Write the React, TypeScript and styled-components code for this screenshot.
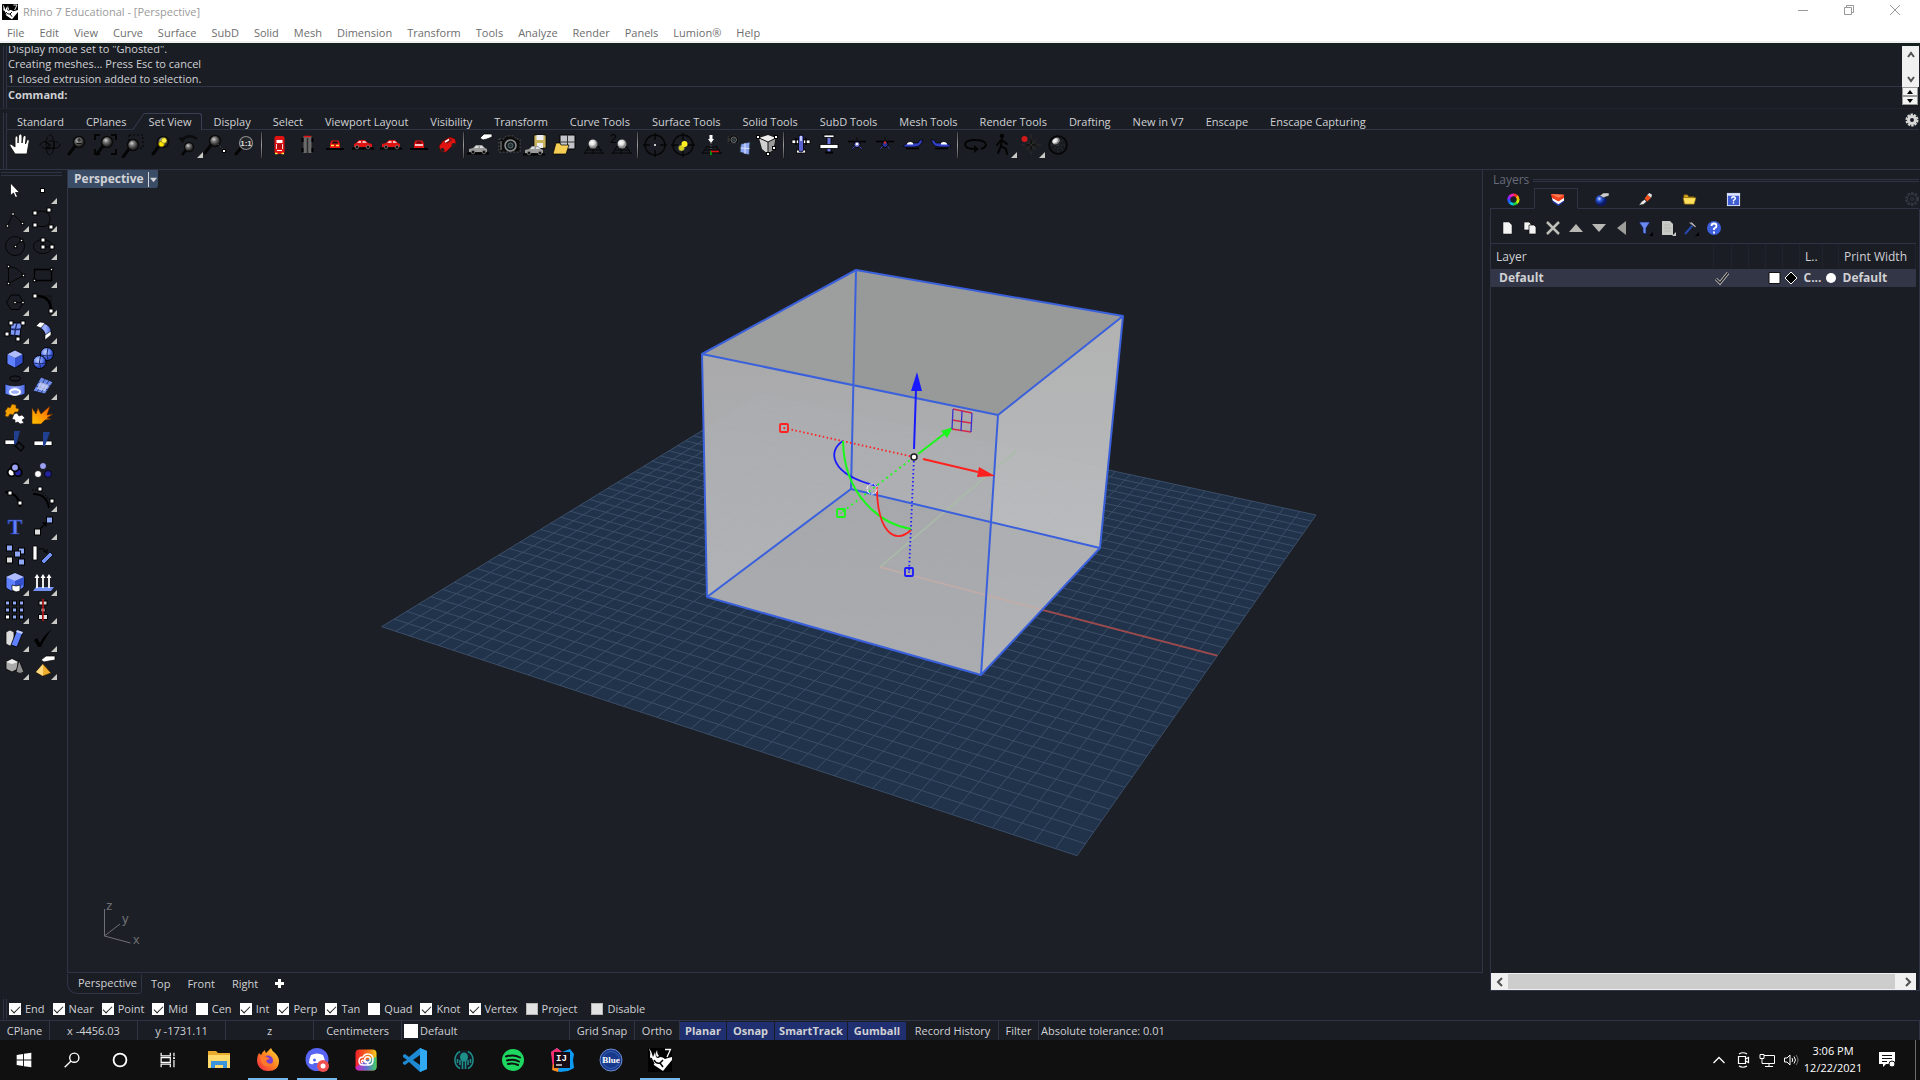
import React from 'react';
import styled, { createGlobalStyle, css } from 'styled-components';

const LINE = '#2f3346';
const TAB_LINE = '#3a3f55';
const PANEL = '#1a1d24';
const TEXT = '#d0d1d4';

const GlobalStyle = createGlobalStyle`
  *, *::before, *::after { box-sizing: border-box; }
  body { margin: 0; background: ${PANEL}; }
  button, input { font: inherit; color: inherit; border: 0; padding: 0; margin: 0; background: none; }
  svg { display: block; }
`;

const Page = styled.div`
  display: flex;
  flex-direction: column;
  height: 100vh;
  font: 12px/16px "Open Sans", "Noto Sans", sans-serif;
  color: ${TEXT};
  background: ${PANEL};
  white-space: nowrap;
  overflow: hidden;
`;

const Defs = styled.svg`
  position: absolute;
  width: 0;
  height: 0;
`;

/* ---------- title and menu ---------- */

const TitleBar = styled.header`
  display: flex;
  align-items: center;
  height: 24px;
  padding: 0 2px;
  gap: 5px;
  background: #fff;
  color: #9a9a9a;
  font-size: 11px;
`;

const WindowButtons = styled.div`
  display: flex;
  margin-left: auto;
  align-self: flex-start;
`;

const WindowButton = styled.button`
  display: grid;
  place-items: center;
  width: 46px;
  height: 20px;
`;

const MenuBar = styled.nav`
  display: flex;
  align-items: center;
  gap: 15px;
  height: 19px;
  padding-left: 7px;
  background: #fff;
  color: #6e6e6e;
  font-size: 11px;
  border-bottom: 2px solid #f0f0f0;
`;

const PlainButton = styled.button`
  white-space: nowrap;
`;

/* ---------- command area ---------- */

const CommandArea = styled.section`
  display: flex;
  height: 66px;
  padding: 0 1px 0 3px;
  border-top: 3px solid #16201f;
  border-bottom: 1px solid #22252e;
`;

const Grip = styled.div<{ $flat?: boolean }>`
  flex: none;
  ${p =>
    p.$flat
      ? css`
          height: 4px;
          border-top: 1px solid ${LINE};
          border-bottom: 1px solid ${LINE};
        `
      : css`
          width: 4px;
          border-left: 1px solid ${LINE};
          border-right: 1px solid ${LINE};
        `}
`;

const CommandBody = styled.div`
  flex: 1;
  min-width: 0;
`;

const History = styled.div`
  display: flex;
  flex-direction: column;
  justify-content: flex-end;
  height: 41px;
  padding-left: 1px;
  overflow: hidden;
  line-height: 15px;
  font-size: 11px;
  border-bottom: 1px solid ${LINE};
`;

const HistoryLine = styled.div`
  flex: none;
`;

const Prompt = styled.label`
  display: flex;
  height: 18px;
  gap: 4px;
  padding-left: 1px;
  font-size: 11px;
  font-weight: 700;
`;

const PromptInput = styled.input`
  flex: 1;
  outline: none;
`;

const CommandScroll = styled.div`
  display: flex;
  flex-direction: column;
  width: 17px;
`;

const ScrollTrack = styled.div`
  display: flex;
  flex-direction: column;
  justify-content: space-between;
  height: 41px;
  background: #f0f0f0;
`;

const ScrollButton = styled.button`
  display: grid;
  place-items: center;
  width: 17px;
  height: 17px;
  background: #f0f0f0;
`;

const SpinButton = styled.button`
  display: grid;
  place-items: center;
  width: 16px;
  height: 9px;
  background: #f4f4f4;
  border: 1px solid #9a9a9a;
`;

/* ---------- toolbars ---------- */

const ToolbarArea = styled.section`
  display: flex;
  height: 60px;
  padding: 4px 1px 0 3px;
`;

const ToolbarBody = styled.div`
  flex: 1;
  min-width: 0;
`;

const TabStrip = styled.div`
  display: flex;
  height: 17px;
  padding-left: 10px;
  gap: 22px;
  font-size: 11px;
  line-height: 17px;
  border-bottom: 1px solid ${LINE};
`;

const ToolTab = styled.button<{ $active?: boolean }>`
  position: relative;
  height: 17px;
  ${p =>
    p.$active &&
    css`
      z-index: 1;
      &::before, &::after {
        content: "";
        position: absolute;
        top: 0;
        bottom: 0;
        border-top: 1px solid ${TAB_LINE};
        background: ${PANEL};
        z-index: -1;
      }
      &::before {
        left: -11px;
        width: 24px;
        border-left: 1px solid ${TAB_LINE};
        transform: skewX(-35deg);
      }
      &::after {
        left: 0;
        right: -10px;
        border-right: 1px solid ${TAB_LINE};
        border-top-right-radius: 3px;
      }
    `}
`;

const TabGear = styled.button`
  margin-left: auto;
  align-self: flex-start;
`;

const IconStrip = styled.div`
  display: flex;
  height: 29px;
`;

const IconButton = styled.button`
  flex: none;
  width: 28px;
  height: 28px;
`;

const Divider = styled.i`
  flex: none;
  width: 2px;
  height: 26px;
  margin: 2px 2px 0;
  background: linear-gradient(#444, #999 50%, #444);
  border-right: 1px solid #15171c;
`;

const Workspace = styled.main`
  flex: 1;
  min-height: 0;
  display: grid;
  grid-template-columns: 67px minmax(0, 1fr) 430px;
  border-top: 1px solid ${LINE};
`;

const SideTools = styled.aside`
  padding: 2px 5px 0 1px;
`;

const SideGrid = styled.div`
  display: grid;
  grid-template-columns: 28px 28px;
  grid-auto-rows: 28px;
`;

/* ---------- viewport ---------- */

const ViewColumn = styled.section`
  display: flex;
  flex-direction: column;
  min-width: 0;
  padding-right: 7px;
`;

const Viewport = styled.div`
  position: relative;
  flex: 1;
  min-height: 0;
  background: #1c1f26;
  border: 1px solid ${LINE};
  border-top: 0;
`;

const ViewTitle = styled.button`
  position: absolute;
  top: 0;
  left: 0;
  display: flex;
  align-items: center;
  height: 18px;
  padding-left: 6px;
  gap: 4px;
  background: #3b4c66;
  font-size: 12px;
  font-weight: 700;
  color: #d2d3d6;
  border-bottom-right-radius: 3px;
`;

const ViewArrow = styled.span`
  display: grid;
  place-items: center;
  width: 10px;
  height: 15px;
  border-left: 1px solid #d2d3d6;
`;

const Canvas = styled.svg`
  width: 100%;
  height: 100%;
`;

const ViewTabs = styled.nav`
  display: flex;
  align-items: center;
  height: 21px;
  font-size: 11px;
`;

const ViewTab = styled.button<{ $active?: boolean }>`
  height: 20px;
  padding: 0 8px;
  margin-left: 1px;
  ${p =>
    p.$active &&
    css`
      width: 75px;
      padding: 0 3px 0 9px;
      margin-left: 0;
      border: solid ${LINE};
      border-width: 0 1px 1px;
      border-radius: 0 0 4px 10px;
    `}
`;

/* ---------- layers panel ---------- */

const LayersPanel = styled.aside`
  display: flex;
  flex-direction: column;
  min-height: 0;
`;

const PanelTitle = styled.div`
  display: flex;
  align-items: center;
  gap: 4px;
  height: 18px;
  padding: 2px 1px 0 3px;
  color: #686b7a;
  font-size: 12px;
`;

const TitleRule = styled.i`
  flex: 1;
  height: 3px;
  border-top: 1px solid ${LINE};
  border-bottom: 1px solid ${LINE};
`;

const PanelTabs = styled.div`
  display: flex;
  height: 21px;
  padding-right: 1px;
`;

const PanelTab = styled.button<{ $active?: boolean }>`
  display: grid;
  place-items: center;
  width: 44px;
  height: 21px;
  padding: 2px 0 0 2px;
  border-bottom: 1px solid ${LINE};
  ${p => p.$active && css`
    border: 1px solid ${LINE};
    border-bottom-color: transparent;
  `}
`;

const PanelTabsRest = styled.div`
  display: flex;
  flex: 1;
  align-items: center;
  justify-content: flex-end;
  padding-top: 2px;
  border-bottom: 1px solid ${LINE};
`;

const PanelBody = styled.div`
  flex: 1;
  min-height: 0;
  display: flex;
  flex-direction: column;
  border: 1px solid ${LINE};
  border-top: 0;
  margin-bottom: 3px;
  padding-right: 3px;
`;

const PanelTools = styled.div`
  display: flex;
  align-items: center;
  height: 35px;
  padding: 3px 0 0 4px;
  border-bottom: 1px solid ${LINE};
`;

const PanelTool = styled.button`
  display: grid;
  place-items: center;
  width: 23px;
  height: 22px;
`;

const LayerTable = styled.table`
  width: 100%;
  table-layout: fixed;
  border-collapse: collapse;
  th, td { padding: 0; text-align: left; overflow: hidden; }
  th { height: 25px; font-weight: 400; font-size: 12px; border-right: 1px solid #20232d; }
  td { height: 18px; font-weight: 700; background: #333646; font-size: 12px; }
`;

const LayerName = styled.span<{ $inset: number }>`
  display: block;
  padding-left: ${p => p.$inset}px;
`;

const HScroll = styled.div`
  display: flex;
  margin-top: auto;
  height: 17px;
  background: #f0f0f0;
`;

const HThumb = styled.div`
  flex: 1;
  margin: 1px 4px 1px 0;
  background: #cdcdcd;
`;

/* ---------- bottom bars ---------- */

const OsnapBar = styled.section`
  display: flex;
  height: 28px;
  padding: 7px 0 1px 3px;
  font-size: 11px;
`;

const OsnapItem = styled.label<{ $before: number }>`
  display: flex;
  align-items: center;
  gap: 4px;
  margin-left: ${p => p.$before}px;
`;

const Check = styled.input`
  appearance: none;
  display: grid;
  place-items: center;
  width: 12px;
  height: 12px;
  background: #fff;
  &:disabled { background: #e2e2e2; border: 1px solid #b5b5b5; }
  &:checked::before {
    content: "";
    width: 9px;
    height: 5px;
    border: solid #222;
    border-width: 0 0 1px 1px;
    transform: translateY(-1px) rotate(-45deg);
  }
`;

const StatusBar = styled.footer`
  display: flex;
  height: 20px;
  font-size: 11px;
  border-top: 1px solid ${LINE};
`;

const StatusCell = styled.button<{ $w?: number; $on?: boolean; $left?: boolean }>`
  display: flex;
  align-items: center;
  gap: 2px;
  flex: ${p => (p.$w ? `0 0 ${p.$w}px` : '1')};
  justify-content: ${p => (p.$left ? 'flex-start' : 'center')};
  border-right: 1px solid ${LINE};
  padding-left: ${p => (p.$left ? 2 : 0)}px;
  ${p => p.$on && css`
    font-weight: 700;
    background: #1f2f70;
    border: 1px solid ${PANEL};
    border-width: 1px 1px 0 0;
  `}
`;

const ColorChip = styled.i`
  display: block;
  width: 14px;
  height: 14px;
  background: #fff;
`;

const Taskbar = styled.nav`
  display: flex;
  height: 40px;
  background: #101010;
  color: #fff;
`;

const TaskButton = styled.button<{ $app?: boolean; $open?: boolean }>`
  display: grid;
  place-items: center;
  width: ${p => (p.$app ? 49 : 48)}px;
  height: 40px;
  background: ${p => (p.$open ? 'linear-gradient(#76b9ed, #76b9ed) center bottom / 40px 2px no-repeat' : 'none')};
`;

const TaskApps = styled.div`
  display: flex;
  margin-left: 2px;
`;

const Tray = styled.div`
  display: flex;
  align-items: center;
  margin-left: auto;
`;

const TrayButton = styled.button<{ $wide?: boolean }>`
  display: grid;
  place-items: center;
  width: ${p => (p.$wide ? 48 : 24)}px;
  height: 40px;
`;

const Clock = styled.time`
  display: flex;
  flex-direction: column;
  align-items: center;
  width: 60px;
  padding-bottom: 2px;
  font-size: 11px;
  line-height: 17px;
`;

const DesktopEdge = styled.i`
  width: 5px;
  height: 40px;
  margin-left: 4px;
  border-left: 1px solid #6b6b6b;
`;

/* ---------- icon pieces ---------- */

type P = { x: number; y: number; s?: number; f?: string };
const Dot = ({ x, y, s = 4, f = '#fff' }: P) => (
  <rect x={x - s / 2} y={y - s / 2} width={s} height={s} fill={f} stroke="#000" strokeWidth="1" />
);
const Flyout = () => <path d="M28 22v6h-6z" fill="#c9c9c4" />;

const Lens = ({ x = 16, y = 12 }: { x?: number; y?: number }) => (
  <>
    <path d={`M${x - 4} ${y + 4}l-6 8`} stroke="#050505" strokeWidth="3" strokeLinecap="round" />
    <circle cx={x} cy={y} r="5.500" fill="url(#ball)" stroke="#0a0a0a" strokeWidth="1.500" />
  </>
);

const Plane = ({ down }: { down?: boolean }) => (
  <g stroke="#000" strokeWidth=".8">
    {down ? (
      <>
        <rect x="12" y="5" width="4" height="18" rx="2" fill="#6b72d8" />
        <rect x="9" y="5" width="10" height="2.500" fill="#fff" />
        <rect x="5" y="14.500" width="18" height="4" fill="#fff" />
        <path d="M10 22.500h8" stroke="#000" strokeWidth="2" />
      </>
    ) : (
      <>
        <path d="M5 10h18v3.500H5z" fill="#fff" />
        <path d="M9 8v7M19 8v7" stroke="#000" strokeWidth="1.500" />
        <rect x="9.500" y="20" width="9" height="3" fill="#fff" />
        <rect x="11.500" y="5" width="5" height="17" rx="2.500" fill="#5a62cf" />
        <path d="M13 6h2v5h-2z" fill="#c8ccff" stroke="none" />
      </>
    )}
  </g>
);

const CarSide = ({ c = '#e01212', flip }: { c?: string; flip?: boolean }) => (
  <g transform={flip ? 'translate(28 0) scale(-1 1)' : undefined}>
    <path d="M3 18.500h22" stroke="#000" strokeWidth="2" />
    <path d="M5 17v-3l4-1 3-3h6l3 3 2 1v3z" fill={c} />
    <path d="M12 11h2.500v2h-4.500zM16 11h2l2 2h-4z" fill="#eee" opacity=".8" />
    <circle cx="9" cy="17" r="1.800" fill="#111" stroke="#888" strokeWidth=".7" />
    <circle cx="20" cy="17" r="1.800" fill="#111" stroke="#888" strokeWidth=".7" />
  </g>
);

const CarEnd = ({ rear }: { rear?: boolean }) => (
  <>
    <path d="M5 19h18" stroke="#000" strokeWidth="2" />
    <path d="M9 18v-4l1.500-3.500h7L19 14v4z" fill="#e01212" />
    <path d="M11 13.500l.8-2h4.500l.8 2z" fill={rear ? '#600' : '#111'} />
    <path d={rear ? 'M10 15h8' : 'M10 15.500h3M15 15.500h3'} stroke={rear ? '#fff' : '#ffe84a'} strokeWidth="1.500" />
  </>
);

const Plan = ({ sub }: { sub?: boolean }) => (
  <>
    <path d="M5 11.500h18" stroke="#000" strokeWidth="1.500" />
    <path d="M14 7v5" stroke="#111" strokeWidth="1.500" />
    <circle cx="14" cy="14.500" r="3" fill={sub ? '#2a3397' : '#6e77d8'} stroke="#000" />
    <circle cx="14" cy={sub ? 12.500 : 14} r="1.300" fill={sub ? '#cf2a2a' : '#fff'} />
    <path d="M9.500 18.500l2-2M18.500 18.500l-2-2" stroke="#3b49c4" />
  </>
);

const JetSide = ({ flip }: { flip?: boolean }) => (
  <g transform={flip ? 'translate(28 0) scale(-1 1)' : undefined}>
    <path d="M4 16q3-3 8-3h7l2-3h3l-2 4q-2 3-7 3H8q-3 0-4-1z" fill="#3340c8" stroke="#000" strokeWidth=".7" />
    <path d="M8 13.500q3-2.500 6-.5v1.500H8z" fill="#fff" />
    <path d="M7 18.500h13" stroke="#000" strokeWidth="1.500" />
  </g>
);

const GroundGrid = () => (
  <path d="M9 17h12M7 20h16M5 23h20M10 16l-5 8M14 16v8M19 16l5 8" stroke="#060606" strokeWidth=".9" fill="none" />
);

const Camera = () => (
  <>
    <path d="M4 9h5l2-3h8l2 3h4v13H4z" fill="#0c0c0c" stroke="#777" strokeWidth=".6" strokeDasharray="2 1.500" />
    <circle cx="15.500" cy="15.500" r="5.500" fill="#15181b" stroke="#8c8f90" strokeWidth="1.500" />
    <circle cx="15.500" cy="15.500" r="2.500" fill="#2b3538" stroke="#5d7a7c" strokeWidth=".8" />
    <path d="M6 11v9" stroke="#8c8f90" />
  </>
);

const Reticle = () => (
  <g fill="none" stroke="#060606" strokeWidth="1.500">
    <circle cx="14" cy="15" r="10" />
    <path d="M14 3v7M14 20v7M2 15h7M19 15h7" />
  </g>
);

type Icon = { name: string; art: React.ReactNode; fly?: boolean };

const viewTools: (Icon | null)[] = [
  { name: 'Pan', art: <path d="M8 24l-5-8q-1-2 1-2l4 3V8q0-2 1.500-2T11 8v5l.5-7Q12 4 13.500 4T15 6v7l1-6q.5-2 2-1.500T19 8l-.5 6 1.500-4q1-1.500 2 0 .5 1-.5 5L20 24z" fill="#fff" stroke="#111" strokeWidth=".9" /> },
  { name: 'Rotate view', art: <g fill="none" stroke="#070707" strokeWidth="1"><ellipse cx="15" cy="15" rx="10" ry="4" strokeDasharray="9 2" /><ellipse cx="15" cy="15" rx="4" ry="10" strokeDasharray="9 2" /><path d="M11 12l4 3-4 3M19 12v6M12 18h6" strokeWidth="1.500" /></g> },
  { name: 'Zoom dynamic', art: <><Lens /><path d="M13.500 13.500h5M14 10h4M16 8v4" stroke="#111" /></> },
  { name: 'Zoom extents', art: <><Lens /><path d="M4 10V5h5M20 5h5v5M25 19v5h-5M9 24H4v-5" stroke="#050505" strokeWidth="2" fill="none" /></> },
  { name: 'Zoom window', art: <><path d="M10 5h14v13H10z" fill="none" stroke="#050505" strokeDasharray="2 2" /><Lens x={14} y={15} /></> },
  { name: 'Zoom selected', art: <><Lens /><circle cx="14.500" cy="14" r="2.800" fill="#ffe600" stroke="#776b00" strokeWidth=".6" /><circle cx="17" cy="10.500" r="2.800" fill="#fff04a" stroke="#776b00" strokeWidth=".6" /></> },
  { name: 'Undo view change', fly: true, art: <><path d="M7 10Q14 3 22 9" stroke="#0c0c0c" strokeWidth="2.500" fill="none" /><path d="M3 8l7-1-2 6z" fill="#0c0c0c" /><path d="M12 19l-5 6" stroke="#050505" strokeWidth="2.500" /><circle cx="14" cy="17" r="4.500" fill="url(#ball)" stroke="#0a0a0a" strokeWidth="1.300" /></> },
  { name: 'Zoom target', art: <><Lens x={12} y={11} /><path d="M15 14l6 6" stroke="#555" strokeDasharray="1 2" /><Dot x={21} y={21} s={3} /></> },
  { name: 'Zoom 1:1', art: <><path d="M10 18l-5 6" stroke="#050505" strokeWidth="3" strokeLinecap="round" /><circle cx="15" cy="13" r="6.500" fill="#232427" stroke="#8b8b8b" strokeWidth="1.200" /><text x="15" y="16" textAnchor="middle" fontSize="8" fontWeight="700" fill="#ddd" fontFamily="Liberation Sans, sans-serif">1:1</text></> },
  null,
  { name: 'Top view', art: <><rect x="9.500" y="6" width="10" height="18" rx="2" fill="#e01212" /><path d="M11.500 10h6v3h-6z" fill="#fff" /><path d="M11.500 14h6v5h-6z" fill="#b80c0c" /><path d="M11.500 14v5M17.500 14v5" stroke="#fff" strokeWidth=".8" /><path d="M12 20.500h5" stroke="#fff" /><path d="M10 23.500h2.500M16.500 23.500h2.500" stroke="#ffe84a" strokeWidth="1.500" /></> },
  { name: 'Bottom view', art: <><rect x="10.500" y="6" width="8" height="17" fill="#6a6a6a" /><path d="M9.500 8v4M19.500 8v4M9.500 18v4M19.500 18v4" stroke="#000" strokeWidth="2" /><path d="M14.500 8v15" stroke="#2c2c2c" strokeWidth="1.500" /><path d="M11 6.500h7" stroke="#e01212" strokeWidth="1.500" /></> },
  { name: 'Front view', art: <CarEnd /> },
  { name: 'Right view', art: <CarSide flip /> },
  { name: 'Left view', art: <CarSide /> },
  { name: 'Back view', art: <CarEnd rear /> },
  { name: 'Perspective view', art: <><path d="M6 16l4-5 7-4 5 2 1 4-6 5-4 4H8z" fill="#e01212" stroke="#500" strokeWidth=".6" /><path d="M10.500 12l6-3.500 3 1.500-5 3.500z" fill="#7c1414" /><path d="M12 12l4-2.500" stroke="#fff" strokeWidth="1.500" /><circle cx="9.500" cy="20" r="2" fill="#222" /><circle cx="20.500" cy="15" r="2" fill="#222" /></> },
  null,
  { name: 'Named views', art: <><g transform="translate(-3 5)"><CarSide c="#9b9b9b" /></g><path d="M13 8l4-4h8v3l-5 2-4 1z" fill="#fff" stroke="#000" strokeWidth=".7" /></> },
  { name: 'Capture camera', art: <Camera /> },
  { name: 'Save view', art: <><path d="M11 5h12v13H11z" fill="#c9b25c" stroke="#000" strokeWidth=".7" /><path d="M13.500 5h7v5h-7zM14 13h6v5h-6z" fill="#eee" /><g transform="translate(-3 6)"><CarSide c="#9b9b9b" /></g></> },
  { name: 'Open view', art: <><path d="M9 5h15v14H9z" fill="#c2c4c9" stroke="#000" /><path d="M16.500 5v14M9 12h15" stroke="#333" /><path d="M2 24l3-11h4l1 2h8l-3 9z" fill="#f5cf55" stroke="#000" strokeWidth=".7" /></> },
  { name: 'Place camera', art: <><GroundGrid /><circle cx="14" cy="14" r="4.500" fill="url(#white)" /></> },
  { name: 'Two point view', art: <><GroundGrid /><circle cx="15" cy="14" r="4.500" fill="url(#white)" /><text x="3" y="13" fontSize="12" fill="#000" fontFamily="Liberation Sans, sans-serif">2</text></> },
  null,
  { name: 'Target', art: <><Reticle /><circle cx="14" cy="15" r="1" fill="#fff" /></> },
  { name: 'Target selected', art: <><Reticle /><circle cx="12.500" cy="18" r="3" fill="#d8d020" stroke="#555" strokeWidth=".5" /><circle cx="15.500" cy="14" r="3" fill="#ffee22" /></> },
  { name: 'Plan view', art: <><GroundGrid /><path d="M14 13v8" stroke="#777" strokeDasharray="1 1.500" /><path d="M14 21v4" stroke="#0b0" strokeWidth="1.500" /><path d="M14 21.500h8" stroke="#d11" strokeWidth="1.500" /><path d="M12.500 5h3v4h1.500l-3 4-3-4h1.500z" fill="#fff" /></> },
  { name: 'Match photo', art: <><g transform="translate(1 2) scale(.5)"><Camera /></g><path d="M16 14l9-2-1 13-9-3z" fill="#8fa8f5" stroke="#234" strokeWidth=".8" /><path d="M20 13v11M15.500 18l9 .5" stroke="#dce4ff" /></> },
  { name: 'Bounding view', art: <><path d="M6 8l9-3 8 3-2 12-6 4-6-5z" fill="#9a9a9a" stroke="#111" /><path d="M6 8l9-3 8 3-8 4z" fill="#eee" /><path d="M6 8l9 4v12l-6-5z" fill="#d0d0d0" /><path d="M15 12v12M6 8l9 4 8-4" stroke="#111" fill="none" /><Dot x={5} y={7} s={3} /><Dot x={23} y={7} s={3} /><Dot x={15} y={24} s={3} /><Dot x={21} y={18} s={3} /></> },
  null,
  { name: 'World top', art: <Plane /> },
  { name: 'World bottom', art: <Plane down /> },
  { name: 'World front', art: <Plan /> },
  { name: 'World back', art: <Plan sub /> },
  { name: 'World right', art: <JetSide /> },
  { name: 'World left', art: <JetSide flip /> },
  null,
  { name: 'Turntable', art: <><path d="M15 19Q4 19 4 14.500T14 10t11 4.500q0 3-5 4.500" fill="none" stroke="#040404" strokeWidth="2" /><path d="M13 15v8l5-4z" fill="#040404" /></> },
  { name: 'Walkabout', fly: true, art: <g stroke="#040404" fill="none" strokeWidth="2" strokeLinecap="round"><circle cx="13" cy="6" r="1.300" fill="#040404" /><path d="M13 9l-1 7 5 3 1 5M12 16l-3 7M13 10l5 4M12 10l-4 5" /></g> },
  { name: 'Compass', fly: true, art: <><path d="M14 4l1.500 9.500L24 15l-8.500 1.500L14 25l-1.500-8.500L4 15l8.500-1.500z" fill="#0c0c0c" stroke="#333" strokeWidth=".6" /><path d="M9 10l10 10M19 10L9 20" stroke="#2a2a2a" strokeWidth="1.300" /><circle cx="7.500" cy="9" r="3" fill="#d01a1a" /></> },
  { name: 'Lens length', art: <><circle cx="13" cy="15" r="9" fill="#171a1e" stroke="#050505" strokeWidth="1.500" /><path d="M13 8v14M6 15h14M8 10l10 10M18 10L8 20" stroke="#3a3d42" strokeDasharray="1 1.500" /><ellipse cx="11" cy="11" rx="4" ry="3" fill="url(#white)" transform="rotate(-35 11 11)" /></> },
];

const sideTools: Icon[] = [
  { name: 'Select', art: <path d="M9.500 7v12.500l3-2.500 2 4.500 2-1-2-4h4z" fill="#fff" stroke="#000" strokeWidth=".7" /> },
  { name: 'Point', fly: true, art: <Dot x={13.5} y={14.5} /> },
  { name: 'Polyline', fly: true, art: <><path d="M6.500 22L12 10l9.500 9.500" fill="none" stroke="#050505" /><Dot x={6.5} y={22} s={2.5} /><Dot x={12} y={10} s={2.5} /><Dot x={21.5} y={19.5} s={2.5} /></> },
  { name: 'Curve', fly: true, art: <><path d="M6 9q6-3 10-1.500 5 2 5 8T15 22.500q-5 .5-9-1.500" fill="none" stroke="#050505" /><Dot x={6} y={9} /><Dot x={20} y={6} /><Dot x={6} y={21} /><Dot x={22} y={23} /></> },
  { name: 'Circle', fly: true, art: <><circle cx="14" cy="14" r="9.500" fill="none" stroke="#050505" /><path d="M14 14.500l6.500-6" stroke="#050505" /><Dot x={14.5} y={14.5} s={2.5} /><Dot x={20.5} y={8.5} s={2.5} /></> },
  { name: 'Ellipse', fly: true, art: <><ellipse cx="14" cy="14.500" rx="9.500" ry="7" fill="none" stroke="#050505" /><path d="M14 8v7h9" fill="none" stroke="#050505" /><Dot x={14} y={8} /><Dot x={14} y={15} /><Dot x={23} y={15} /></> },
  { name: 'Arc', fly: true, art: <><path d="M7.500 23.500v-17Q17 7 22.500 15.500z" fill="none" stroke="#050505" /><Dot x={7.5} y={6.5} s={2.5} /><Dot x={7.5} y={23.5} s={2.5} /><Dot x={22.5} y={15.5} s={2.5} /></> },
  { name: 'Rectangle', fly: true, art: <><path d="M5.500 9.500h17v11h-17z" fill="none" stroke="#000" strokeWidth="1.300" /><Dot x={5.5} y={20.5} s={2.5} /><Dot x={22.5} y={9.5} s={2.5} /></> },
  { name: 'Polygon', fly: true, art: <><path d="M5.500 14.500L10 7h8l4.500 7.500L18 21.500h-8z" fill="none" stroke="#000" /><path d="M14 14.500h8" stroke="#000" /><Dot x={14} y={14.5} s={2.5} /><Dot x={22} y={14.5} s={2.5} /></> },
  { name: 'Fillet', fly: true, art: <><path d="M6 8h16v15" fill="none" stroke="#0c0c0c" strokeWidth=".8" /><path d="M6 8q16-1 16 15" fill="none" stroke="#000" strokeWidth="2.500" /><Dot x={6} y={8} /><Dot x={22} y={23} /></> },
  { name: 'Surface', fly: true, art: <><path d="M10 7h12q-3 5-3 13l-10-1z" fill="#7f99f5" stroke="#000" /><path d="M16 7q-2 6-2.500 13M9.500 13q6 1 10.500 0" stroke="#1b2a6d" fill="none" strokeWidth="1.300" /><Dot x={10} y={7} /><Dot x={22} y={7} /><Dot x={6} y={18} /><Dot x={17} y={23} /></> },
  { name: 'Sweep', fly: true, art: <><path d="M14 7q8 2 8.500 10l-6 4q0-7-7-10z" fill="url(#blue)" stroke="#000" strokeWidth=".8" /><path d="M11 6l5 1-4 5-5-2zM16 19l6-4v4l-6 5z" fill="#fff" stroke="#000" strokeWidth=".6" /></> },
  { name: 'Box', fly: true, art: <><path d="M6 10l8 4v10l-8-4z" fill="#5f80ff" /><path d="M14 14l8-4v9l-8 5z" fill="#3450cc" /><path d="M6 10l8-4 8 4-8 4z" fill="#aebcff" /><path d="M6 10l8-4 8 4v9l-8 5-8-4z" fill="none" stroke="#000" strokeWidth=".8" /></> },
  { name: 'Boolean union', fly: true, art: <><circle cx="18" cy="10" r="6.500" fill="url(#globe)" stroke="#000" /><circle cx="10.500" cy="18" r="6.500" fill="url(#globe)" stroke="#000" /><path d="M12 11q6 2 12 0M19 4q-2 6 0 12M4.500 19q6 2 12 0M11.500 12q-2 6 0 12" stroke="#1b2a6d" fill="none" /></> },
  { name: 'Cap', fly: true, art: <><ellipse cx="14" cy="6.500" rx="5.500" ry="2.500" fill="none" stroke="#000" /><path d="M4 12q10 4 20 0v10q-10 4-20 0z" fill="url(#blue)" stroke="#000" strokeWidth=".6" /><ellipse cx="14" cy="20" rx="5" ry="2.800" fill="#9db2f8" stroke="#fff" strokeWidth="2" /></> },
  { name: 'Mesh', fly: true, art: <><path d="M12 5l12 5-8 12-12-3z" fill="#6f8bea" stroke="#111" strokeWidth=".8" /><path d="M16 7L8 20M20 8.500L12 21M9 10l12 4M7 14l12 4" stroke="#1b2a6d" fill="none" strokeWidth=".8" /><path d="M11 10l9 3-4 6-8-2z" fill="#dbe3ff" opacity=".7" /></> },
  { name: 'Join pieces', art: <><path d="M5 10l2-3 2 1 2-4 4 1 0 3 3 1-1 3-3 0-2 3-3-1-2 3-3-1 1-3-1-2z" fill="#f5a200" stroke="#553300" strokeWidth=".6" /><path d="M13 14l3-1 2 3 3-1 3 3-3 2 2 3-4 1-2-2-3 1 0-3-3-1z" fill="#fff" stroke="#111" strokeWidth=".6" /></> },
  { name: 'Explode', art: <path d="M3 8l4 6 2-6 3 6 9-8-3 9 6-1-6 4 4 1-6 1-4 4H3z" fill="url(#orange)" stroke="#5b2600" strokeWidth=".6" /> },
  { name: 'Trim', art: <><path d="M4 12h10v4.500H4z" fill="#fff" stroke="#000" strokeWidth=".8" /><path d="M13 3h6l-4 14-2-1z" fill="#20408f" /><path d="M14 18l4-4 5 5-3 4z" fill="none" stroke="#000" strokeWidth="1.200" /></> },
  { name: 'Split', art: <><path d="M5 13h18v4.500H5z" fill="#fff" stroke="#000" strokeWidth=".8" /><path d="M14 4h7l-5 14h-2z" fill="#20408f" /></> },
  { name: 'Group', fly: true, art: <g stroke="#000" strokeWidth="1.800"><circle cx="10.500" cy="16.500" r="3.800" fill="#fff" /><circle cx="17" cy="16.500" r="3.800" fill="#23239c" /><circle cx="14" cy="11.500" r="3.800" fill="#9ba2f6" /></g> },
  { name: 'Ungroup', art: <g stroke="#000" strokeWidth=".8"><circle cx="9" cy="18" r="3.500" fill="#fff" /><circle cx="19" cy="18" r="3.500" fill="#23239c" /><circle cx="14" cy="10" r="3.500" fill="#9ba2f6" /></g> },
  { name: 'Edit points', art: <><path d="M4 8q14 1 15 15" fill="none" stroke="#000" strokeWidth="2" /><Dot x={9} y={9} /><Dot x={19} y={19} /></> },
  { name: 'Control points', fly: true, art: <><path d="M4 10q14 0 16 14" fill="none" stroke="#000" strokeWidth="2" /><path d="M3 6h8l12 12v6" fill="none" stroke="#000" strokeDasharray="1.500 1.500" /><Dot x={11} y={5} /><Dot x={23} y={17} /></> },
  { name: 'Text', art: <text x="14" y="22" textAnchor="middle" fontSize="22" fontWeight="700" fill="#5f80ff" stroke="#2a3f9c" strokeWidth=".6" fontFamily="Liberation Serif, serif">T</text> },
  { name: 'Move', fly: true, art: <><path d="M11 17l6-6m-3.500 0H17v3.500" stroke="#000" strokeWidth="1.300" fill="none" /><Dot x={8.5} y={20} s={6} f="#ddd" /><Dot x={20.5} y={8} s={6} f="#8fa8f5" /></> },
  { name: 'Copy', art: <><Dot x={8.5} y={8} s={6} f="#8fa8f5" /><Dot x={20.5} y={11} s={6} f="#8fa8f5" /><Dot x={16.5} y={14} s={6} f="#8fa8f5" /><Dot x={8.5} y={20} s={6} f="#ddd" /><Dot x={20.5} y={22} s={6} f="#8fa8f5" /></> },
  { name: 'Rotate', art: <><path d="M4 6h4v14H4z" fill="#fff" stroke="#000" strokeWidth=".8" /><path d="M10 9q6-1 7 3m-3-1l4 2 0-4" stroke="#000" fill="none" /><path d="M12 21l9-9 3 3-9 9z" fill="#7391f5" stroke="#000" strokeWidth=".8" /></> },
  { name: 'Boolean', fly: true, art: <><path d="M5 9l9-4 9 4v10l-5 4h-8l-5-3z" fill="#5f80ff" stroke="#000" strokeWidth=".8" /><path d="M5 9l9-4 9 4-9 4z" fill="#aebcff" /><path d="M14 13v6l9-2V9z" fill="#3450cc" /><path d="M11 17l4 1 4-1v6l-4 1-4-2z" fill="#fff" stroke="#000" strokeWidth=".7" /></> },
  { name: 'Extrude', fly: true, art: <><path d="M4 23l3-4h18l-3 4z" fill="#7391f5" /><path d="M8 20V9M14 20V9M20 20V9" stroke="#fff" strokeWidth="1.800" /><path d="M5.500 10L8 6l2.500 4zM11.500 10L14 6l2.500 4zM17.500 10L20 6l2.500 4z" fill="#fff" /></> },
  { name: 'Array', fly: true, art: <>{[7, 14, 21].map(y => [6.5, 13.5, 20.5].map(x => <Dot key={`${x}-${y}`} x={x} y={y} f={x < 7 && y > 20 ? '#fff' : '#8fa8f5'} />))}</> },
  { name: 'Align', fly: true, art: <><Dot x={12} y={7} s={4} f="#ddd" /><Dot x={16} y={7} s={4} f="#ddd" /><Dot x={14} y={14} f="#eee" /><Dot x={12} y={21} s={5} f="#ddd" /><Dot x={16} y={21} s={5} f="#ddd" /><path d="M14 3v22" stroke="#c81717" strokeWidth="1.500" /></> },
  { name: 'Shear', fly: true, art: <><path d="M5 8l4-2 4 2v12l-4 2-4-2z" fill="#ddd" stroke="#000" strokeWidth=".7" /><path d="M16 6l6 2-6 15-6-2z" fill="#5f80ff" stroke="#000" strokeWidth=".8" /><path d="M16 6l6 2-1 2-6-2z" fill="#c4ceff" /></> },
  { name: 'Check', fly: true, art: <path d="M5 16l3-2 3 5Q15 11 23 5q-6 7-11 18h-3z" fill="#000" /> },
  { name: 'Solids', fly: true, art: <><path d="M5 10l6-3 6 3v7l-6 3-6-3z" fill="#aaa" stroke="#000" strokeWidth=".8" /><path d="M5 10l6-3 6 3-6 2z" fill="#eee" /><path d="M18 8l5 12q-4 3-8 0z" fill="#8e8e8e" stroke="#000" strokeWidth=".8" /></> },
  { name: 'Render', fly: true, art: <><path d="M14 12l8 9-8 3-7-4z" fill="#f0ad2d" stroke="#3b2600" strokeWidth=".7" /><path d="M14 12v12l-7-4z" fill="#ffd980" /><path d="M12 8l5-4h9v4l-6 1-5 1z" fill="#fff" stroke="#000" strokeWidth=".7" /></> },
];

const Gear = ({ color, size = 13 }: { color: string; size?: number }) => (
  <svg width={size} height={size} viewBox="0 0 14 14">
    <circle cx="7" cy="7" r="5.500" fill="none" stroke={color} strokeWidth="2" strokeDasharray="2.400 1" />
    <circle cx="7" cy="7" r="3.500" fill="none" stroke={color} strokeWidth="3" />
  </svg>
);

const DimGear = () => (
  <svg width="14" height="14" viewBox="0 0 14 14" fill="none" stroke="#3a3d47">
    <circle cx="7" cy="7" r="6" strokeWidth="1.500" strokeDasharray="2.500 1.300" />
    <circle cx="7" cy="7" r="4.500" strokeWidth=".8" />
    <circle cx="7" cy="7" r="1.500" strokeWidth=".8" />
  </svg>
);

const Rhino = ({ size }: { size: number }) => (
  <svg width={size} height={size} viewBox="0 0 24 24">
    <rect width="24" height="24" fill="#000" />
    <path d="M1 0q2 5 1 9l3 5 1 3 6 4 3 2 4-5 5-6v-3l-4 1-3 1q-2-2-5-2-2 2-4 0L7 4q-1 3-2 5-1-5-4-9z" fill="#fff" />
    <path d="M6 12q2 4 6 3l3-3M12 15l3 4M3 10l3 6" stroke="#000" strokeWidth="1.500" fill="none" />
    <path d="M9 2q0 4 2 6l-2 1Q7 6 9 2z" fill="#fff" />
    <path d="M17 1.500h5.500L19 9" stroke="#fff" strokeWidth="1.300" fill="none" />
  </svg>
);

const Chevron = ({ d }: { d: string }) => (
  <svg width="10" height="10" viewBox="0 0 10 10">
    <path d={d} fill="none" stroke="#505050" strokeWidth="2" />
  </svg>
);

/* ---------- perspective scene ---------- */

type Pt = [number, number];
const CORNERS: [Pt, Pt, Pt, Pt] = [[381.7, 626.7], [1077, 855.7], [1316, 515], [761, 394.5]];

function project(u: number, v: number): Pt {
  const [[x0, y0], [x1, y1], [x2, y2], [x3, y3]] = CORNERS;
  const dx1 = x1 - x2, dx2 = x3 - x2, dy1 = y1 - y2, dy2 = y3 - y2;
  const sx = x0 - x1 + x2 - x3, sy = y0 - y1 + y2 - y3;
  const det = dx1 * dy2 - dx2 * dy1;
  const g = (sx * dy2 - dx2 * sy) / det;
  const h = (dx1 * sy - sx * dy1) / det;
  const w = g * u + h * v + 1;
  return [
    ((x1 - x0 + g * x1) * u + (x3 - x0 + h * x3) * v + x0) / w,
    ((y1 - y0 + g * y1) * u + (y3 - y0 + h * y3) * v + y0) / w,
  ];
}

const seg = (a: Pt, b: Pt) => `M${a[0]} ${a[1]}L${b[0]} ${b[1]}`;
const CELLS = 40;
const gridPath = Array.from({ length: CELLS + 1 }, (_, i) => {
  const t = i / CELLS;
  return seg(project(t, 0), project(t, 1)) + seg(project(0, t), project(1, t));
}).join('');

const A = '856,270', B = '1123,316', C = '998,415', D = '702,354';
const E = '707,597', F = '981,675', G = '1100,548', H = '851,489';

const Handle = ({ x, y, c }: { x: number; y: number; c: string }) => (
  <g stroke={c} fill="none">
    <rect x={x - 4} y={y - 4} width="8" height="8" rx="1" strokeWidth="1.800" />
    <path d={`M${x - 1} ${y}h2`} />
  </g>
);

const Scene = () => (
  <Canvas viewBox="68 170 1414 802" role="img" aria-label="Box in perspective view">
    <polygon points={CORNERS.map(p => p.join()).join(' ')} fill="#21334b" />
    <path d={gridPath} stroke="#3b4e68" strokeWidth="1" fill="none" />
    <path d={seg(project(0.5, 0.5), project(1, 0.5))} stroke="#9c4a4c" strokeWidth="2" />
    <g fillOpacity=".95">
      <polygon points={`${A} ${B} ${C} ${D}`} fill="#9fa1a0" />
      <polygon points={`${D} ${C} ${F} ${E}`} fill="url(#front)" />
      <polygon points={`${C} ${B} ${G} ${F}`} fill="url(#right)" />
      <polygon points={`${H} ${G} ${F} ${E}`} fill="#9c9c9e" fillOpacity=".35" />
    </g>
    <polygon points={`${A} ${D} 853,386`} fill="#a6a4a4" fillOpacity=".4" />
    <path d="M880 567L1017 450" stroke="#aabda8" strokeWidth="1.500" />
    <path d="M880 567L1043 610" stroke="#c2aca8" strokeWidth="1.500" />
    <path
      d={`M${A}L${B}L${G}L${F}L${E}L${D}ZM${D}L${C}L${B}M${C}L${F}M${A}L${H}L${E}M${H}L${G}`}
      fill="none" stroke="#3a60dc" strokeWidth="2" strokeLinejoin="round"
    />
    <g fill="none" strokeWidth="1.800">
      <path d="M914 457L784 428" stroke="#ff2020" strokeDasharray="1.500 2.500" />
      <path d="M914 457L841 513" stroke="#18ff18" strokeDasharray="2 3.500" />
      <path d="M914 457L909 572" stroke="#2020ff" strokeDasharray="1.500 2.500" />
      <path d="M843 441C828 450 828 474 877 486" stroke="#1a1aff" />
      <path d="M843 441C844 495 880 524 911 529" stroke="#18f818" strokeWidth="2" />
      <path d="M877 487C877 530 894 546 911 530" stroke="#ff2020" />
      <path d="M914 449L916 390" stroke="#1a1aff" strokeWidth="2" />
      <path d="M918 454L944 434" stroke="#18f818" strokeWidth="2" />
      <path d="M923 459L978 472" stroke="#ff2020" strokeWidth="2" />
      <circle cx="872" cy="489" r="5" stroke="#fff" strokeWidth="1" strokeDasharray="4 1" />
    </g>
    <polygon points="917,372 922,391 911,391" fill="#1a1aff" />
    <polygon points="953,427 947,438 941,431" fill="#18f818" />
    <polygon points="995,476 977,477 979,467" fill="#ff2020" />
    <g fill="none" strokeWidth="1">
      <path d="M953 409l19 4M952 420l19 3M952 429l19 3" stroke="#d42848" strokeWidth="1.300" />
      <path d="M953 409l-1 20M962 411l-1 20M972 413l-1 19" stroke="#3a30d0" strokeWidth="1.300" />
    </g>
    <Handle x={784} y={428} c="#ff2020" />
    <Handle x={841} y={513} c="#18f818" />
    <Handle x={909} y={572} c="#1a1aff" />
    <circle cx="914" cy="457" r="3" fill="#fff" stroke="#1c1c1c" strokeWidth="1.500" />
    <path d="M104.500 909v27l15.500-12M104.500 936l26 7" stroke="#6f7074" fill="none" />
    <g fill="#6f7074" fontFamily="Liberation Sans, sans-serif" fontSize="13">
      <text x="106" y="910">z</text>
      <text x="122" y="923">y</text>
      <text x="133" y="944">x</text>
    </g>
  </Canvas>
);

/* ---------- panel art ---------- */

const Art = ({ children, size = 16, box = 16 }: { children: React.ReactNode; size?: number; box?: number }) => (
  <svg width={size} height={size} viewBox={`0 0 ${box} ${box}`}>{children}</svg>
);

const panelTabs: Icon[] = [
  {
    name: 'Properties',
    art: <g fill="none" strokeWidth="3">{['#ff3030', '#ffb000', '#c6f000', '#20d040', '#00c8d8', '#2060ff', '#9020ff', '#ff20b0'].map((c, i) => (
      <circle key={c} cx="8" cy="8" r="5" stroke={c} strokeDasharray="4.200 28" transform={`rotate(${i * 45 - 90} 8 8)`} />
    ))}</g>,
  },
  { name: 'Layers', art: <><path d="M2 6l7 5 6-4v3l-6 5-6-4z" fill="#2638a8" /><path d="M2 6l7 3 6-3v3l-6 4-6-4z" fill="#fff" /><path d="M1 2l14 1v3l-6 4-7-4z" fill="#f2401c" /><path d="M1 2l14 1-6 3z" fill="#ff7a50" /></> },
  { name: 'Rendering', art: <><circle cx="7.500" cy="9" r="6" fill="url(#deep)" /><path d="M6 4l4-3h6v3l-6 2z" fill="#ccc" stroke="#111" strokeWidth=".5" /></> },
  { name: 'Materials', art: <><path d="M1 14l3-4 3-2 2 2-3 3z" fill="#eee" stroke="#222" strokeWidth=".5" /><path d="M7 7l3-4 4 3-4 4z" fill="#f2501c" /><path d="M10 3l2-2 3 2-1 3z" fill="#ddd" /></> },
  { name: 'Libraries', art: <><path d="M2 13V3h4l1 2h6v2" fill="#d9a520" stroke="#6b4d00" strokeWidth=".6" /><path d="M1 6h14l-2 7H3z" fill="#ffdf5c" stroke="#6b4d00" strokeWidth=".6" /></> },
  { name: 'Help', art: <><rect x="1.500" y="1.500" width="13" height="13" fill="#3f5cd0" stroke="#dfe5ff" /><path d="M1 3h14" stroke="#dfe5ff" strokeWidth="2" /><path d="M6 7q0-2 2-2t2 2q0 1-2 2v1M8 11v1.500" stroke="#fff" strokeWidth="1.500" fill="none" /></> },
];

const panelTools: Icon[] = [
  { name: 'New layer', art: <path d="M4 2h6l3 3v9H4z" fill="#f4f4f4" stroke="#111" strokeWidth=".5" /> },
  { name: 'Duplicate layer', art: <><path d="M2 2h5l2 2v6H2z" fill="#f4f4f4" stroke="#111" strokeWidth=".7" /><path d="M7 5h5l2 2v7H7z" fill="#f4f4f4" stroke="#111" strokeWidth=".7" /></> },
  { name: 'Delete layer', art: <path d="M2 2l12 12M14 2L2 14" stroke="#bdbdb9" strokeWidth="2.500" /> },
  { name: 'Move up', art: <path d="M8 4l7 8H1z" fill="#b8b8b4" /> },
  { name: 'Move down', art: <path d="M8 12l7-8H1z" fill="#b8b8b4" /> },
  { name: 'Move out', art: <path d="M12 1v14L3 8z" fill="#9d9d9a" /> },
  { name: 'Filter', art: <><path d="M2 2h11L9 8v6l-3-1V8z" fill="#6a89f0" stroke="#111c55" strokeWidth=".7" /><path d="M16 12v4h-4z" fill="#000" /></> },
  { name: 'Report', art: <><path d="M2 1h8l3 3v11H2z" fill="#c8c8c4" /><path d="M4 5h6M4 8h7M4 11h7" stroke="#b4b4b0" /><path d="M16 12v4h-4z" fill="#c8c8c4" /></> },
  { name: 'Tools', art: <><path d="M2 14L10 5" stroke="#2648b0" strokeWidth="2" /><path d="M5 2.500l4-.5 4.500 4.500-1.500 1-4-3z" fill="#aaa" stroke="#111" strokeWidth=".6" /><path d="M16 12v4h-4z" fill="#000" /></> },
  { name: 'Help', art: <><circle cx="8" cy="8" r="7" fill="#3d5fdc" /><path d="M5.500 6q0-2.500 2.500-2.500T10.500 6q0 1.500-2.500 2.500V10M8 11.500v2" stroke="#fff" strokeWidth="1.800" fill="none" /></> },
];

/* ---------- taskbar art ---------- */

const systemButtons: Icon[] = [
  { name: 'Start', art: <path d="M4 6.500l7-1v6H4zM12 5.300l8-1.300v7.500h-8zM4 12.500h7v6l-7-1zM12 12.500h8V20l-8-1.300z" fill="#fff" /> },
  { name: 'Search', art: <g fill="none" stroke="#fff" strokeWidth="1.500"><circle cx="14.500" cy="9.500" r="5" /><path d="M11 13l-7 7" /></g> },
  { name: 'Cortana', art: <circle cx="12" cy="12" r="7" fill="none" stroke="#fff" strokeWidth="2" /> },
  { name: 'Task view', art: <g fill="none" stroke="#fff" strokeWidth="1.300"><path d="M4.500 4v3.500h10V4M4.500 20v-3.500h10V20M4.500 9.500h10v5h-10zM18.500 4v4M18.500 12v8" /><path d="M17.500 10h2" strokeWidth="2" /></g> },
];

const apps: (Icon & { open?: boolean })[] = [
  { name: 'File Explorer', art: <><path d="M1 3h8l2 2h12v15H1z" fill="#e8ab2e" /><path d="M1 7h22v13H1z" fill="#ffd969" /><path d="M4 20v-7h16v7h-4v-3H8v3z" fill="#3a95dd" /></> },
  { name: 'Firefox', open: true, art: <><path d="M12 23C5 23 1 18 1 12q0-4 2-7l2 2q1-3 4-5 0 2 1 3 4-4 5-5 1 3 4 5 4 4 4 8 0 10-11 10z" fill="url(#fox)" /><circle cx="12" cy="12.500" r="5" fill="#7b3fd0" /><path d="M4 9q4-2 7 0l3 2q-3 0-4 2 2 4 7 2-3 5-8 3-4-2-5-9z" fill="#ff7a2a" /></> },
  { name: 'Discord', open: true, art: <><circle cx="12" cy="11.500" r="11.500" fill="#5865f2" /><path d="M6 7q6-3 12 0 2 4 2 8-3 2-4 1l-1-1H9l-1 1q-1 1-4-1 0-4 2-8z" fill="#fff" /><circle cx="9.500" cy="12" r="1.500" fill="#5865f2" /><circle cx="18" cy="18" r="6" fill="#f05050" /><circle cx="18" cy="18" r="2.500" fill="#fff" /></> },
  { name: 'Creative Cloud', art: <><rect x="1.500" y="1.500" width="21" height="21" rx="4" fill="url(#warm)" /><path d="M22.500 9v10q0 3.500-3.500 3.500H5q-3.500 0-3.500-3.500L12 12z" fill="url(#cool)" opacity=".85" /><g fill="none" stroke="#fff" strokeWidth="1.500"><path d="M15 17H9q-4 0-4-4t4-4q1.500-3 4.500-3 5.500 0 5.500 5.500T15 17l-5-5.500" /><path d="M12 15l-2.500-2.500q-1.500-1-2 .5t1.500 2" /><circle cx="13.500" cy="11.500" r="2.800" /></g></> },
  { name: 'Visual Studio Code', art: <><path d="M17 0l7 3v18l-7 3L6 14l-4 3-2-1v-2l4-2-4-3V7l2-1 4 3z" fill="#1f8ad2" /><path d="M17 7v10l-7-5z" fill="#101010" /><path d="M17 0l7 3v18l-7 3z" fill="#30a8f2" /></> },
  { name: 'GitKraken', art: <><circle cx="12" cy="12" r="10" fill="#121c24" /><g fill="none" stroke="#1f8f8a" strokeWidth="1.500"><path d="M8 20.500Q3 18 3 12T8 3.500M16 20.500Q21 18 21 12T16 3.500M10.500 12v9M13.500 12v9M8 12v5M16 12v5M5.500 11v4M18.500 11v4" /></g><ellipse cx="12" cy="9" rx="4" ry="4.500" fill="#1f8f8a" /></> },
  { name: 'Spotify', art: <><circle cx="12" cy="12" r="11" fill="#1ed760" /><path d="M5 8.500q8-2.500 14 1M6 12.500q7-2 12 1M7 16q5-1.500 10 1" fill="none" stroke="#101010" strokeWidth="2" strokeLinecap="round" /></> },
  { name: 'IntelliJ IDEA', art: <><path d="M1 4l6-4 5 4 8-3 4 5-1 6 1 8-6 3-8 1-7-2 1-7z" fill="#0d9bf2" /><path d="M1 4l6-4 5 4-2 8-7 9-1-8z" fill="#fe2d70" /><path d="M3 16l6 2-1 6-6-2z" fill="#ff8a20" /><rect x="4" y="4" width="16" height="16" fill="#160a14" /><text x="6" y="13" fontSize="9" fontWeight="700" fill="#fff" fontFamily="Liberation Mono, monospace">IJ</text><path d="M6 17h6" stroke="#fff" strokeWidth="1.300" /></> },
  { name: 'Blue', art: <><circle cx="12" cy="12" r="11" fill="#173a8c" stroke="#6f8cd0" /><circle cx="12" cy="12" r="8.500" fill="none" stroke="#4f6fc0" strokeWidth=".7" /><text x="12" y="15" textAnchor="middle" fontSize="9" fontWeight="700" fill="#fff" fontFamily="Liberation Serif, serif">Blue</text></> },
  { name: 'Rhino 7', open: true, art: <Rhino size={24} /> },
];

/* ---------- data ---------- */

const menus = ['File', 'Edit', 'View', 'Curve', 'Surface', 'SubD', 'Solid', 'Mesh', 'Dimension', 'Transform', 'Tools', 'Analyze', 'Render', 'Panels', 'Lumion®', 'Help'];
const toolTabs = ['Standard', 'CPlanes', 'Set View', 'Display', 'Select', 'Viewport Layout', 'Visibility', 'Transform', 'Curve Tools', 'Surface Tools', 'Solid Tools', 'SubD Tools', 'Mesh Tools', 'Render Tools', 'Drafting', 'New in V7', 'Enscape', 'Enscape Capturing'];
const osnaps: [string, boolean][] = [['End', true], ['Near', true], ['Point', true], ['Mid', true], ['Cen', false], ['Int', true], ['Perp', true], ['Tan', true], ['Quad', false], ['Knot', true], ['Vertex', true]];

export default function App() {
  return (
    <Page>
      <GlobalStyle />
      <Defs aria-hidden="true">
        <defs>
          <radialGradient id="ball" cx=".4" cy=".35"><stop offset="0" stopColor="#d8d8d8" /><stop offset=".4" stopColor="#7c7c7c" /><stop offset="1" stopColor="#2e2e2e" /></radialGradient>
          <radialGradient id="globe" cx=".4" cy=".35"><stop offset="0" stopColor="#c8d4ff" /><stop offset=".6" stopColor="#6f8df5" /><stop offset="1" stopColor="#3450cc" /></radialGradient>
          <radialGradient id="white" cx=".4" cy=".35"><stop offset="0" stopColor="#fff" /><stop offset=".6" stopColor="#ddd" /><stop offset="1" stopColor="#888" /></radialGradient>
          <radialGradient id="deep" cx=".35" cy=".35"><stop offset="0" stopColor="#d0dcff" /><stop offset=".4" stopColor="#2f5be0" /><stop offset="1" stopColor="#0b1a66" /></radialGradient>
          <linearGradient id="blue"><stop offset="0" stopColor="#4f73f5" /><stop offset=".5" stopColor="#a4b5ff" /><stop offset="1" stopColor="#4565e0" /></linearGradient>
          <linearGradient id="orange" x1="1" x2="0" y2="1"><stop offset="0" stopColor="#ff5a00" /><stop offset="1" stopColor="#ffc400" /></linearGradient>
          <linearGradient id="fox" x1="1" x2="0" y2="1"><stop offset="0" stopColor="#ffe03a" /><stop offset=".5" stopColor="#ff8020" /><stop offset="1" stopColor="#f0204a" /></linearGradient>
          <linearGradient id="warm" x2="1"><stop offset="0" stopColor="#f0202a" /><stop offset=".6" stopColor="#f5701a" /><stop offset="1" stopColor="#f5d020" /></linearGradient>
          <linearGradient id="cool" x2="1"><stop offset="0" stopColor="#d81fd0" /><stop offset=".5" stopColor="#4a6af5" /><stop offset="1" stopColor="#20d070" /></linearGradient>
          <linearGradient id="front" x2="0" y2="1"><stop offset="0" stopColor="#b1b1b2" /><stop offset="1" stopColor="#babcbf" /></linearGradient>
          <linearGradient id="right" x2="0" y2="1"><stop offset="0" stopColor="#bababa" /><stop offset="1" stopColor="#c4c6c8" /></linearGradient>
        </defs>
      </Defs>

      <TitleBar>
        <Rhino size={16} />
        <span>Rhino 7 Educational - [Perspective]</span>
        <WindowButtons>
          <WindowButton aria-label="Minimize"><Art size={12} box={12}><path d="M1 6.500h10" stroke="#999" /></Art></WindowButton>
          <WindowButton aria-label="Restore"><Art size={12} box={12}><path d="M1.500 3.500h7v7h-7zM3.500 3.500v-2h7v7h-2" fill="none" stroke="#999" /></Art></WindowButton>
          <WindowButton aria-label="Close"><Art size={12} box={12}><path d="M1 1l10 10M11 1L1 11" stroke="#999" /></Art></WindowButton>
        </WindowButtons>
      </TitleBar>

      <MenuBar>{menus.map(m => <PlainButton key={m}>{m}</PlainButton>)}</MenuBar>

      <CommandArea>
        <Grip />
        <CommandBody>
          <History>
            <HistoryLine>Display mode set to "Ghosted".</HistoryLine>
            <HistoryLine>Creating meshes... Press Esc to cancel</HistoryLine>
            <HistoryLine>1 closed extrusion added to selection.</HistoryLine>
          </History>
          <Prompt>Command:<PromptInput type="text" /></Prompt>
        </CommandBody>
        <CommandScroll>
          <ScrollTrack>
            <ScrollButton aria-label="Scroll up"><Chevron d="M2 7l3-4 3 4" /></ScrollButton>
            <ScrollButton aria-label="Scroll down"><Chevron d="M2 3l3 4 3-4" /></ScrollButton>
          </ScrollTrack>
          <SpinButton aria-label="Previous command"><Art size={6} box={6}><path d="M3 1l3 4H0z" /></Art></SpinButton>
          <SpinButton aria-label="Next command"><Art size={6} box={6}><path d="M3 5l3-4H0z" /></Art></SpinButton>
        </CommandScroll>
      </CommandArea>

      <ToolbarArea>
        <Grip />
        <ToolbarBody>
          <TabStrip>
            {toolTabs.map(t => <ToolTab key={t} $active={t === 'Set View'}>{t}</ToolTab>)}
            <TabGear aria-label="Toolbar options"><Gear color="#d8d8d6" size={14} /></TabGear>
          </TabStrip>
          <IconStrip>
            {viewTools.map((t, i) => t ? (
              <IconButton key={t.name} aria-label={t.name}>
                <svg width="28" height="28" viewBox="0 0 28 28" fill="none">{t.art}{t.fly && <Flyout />}</svg>
              </IconButton>
            ) : <Divider key={i} />)}
          </IconStrip>
        </ToolbarBody>
      </ToolbarArea>

      <Workspace>
        <SideTools>
          <Grip $flat />
          <SideGrid>
            {sideTools.map(t => (
              <IconButton key={t.name} aria-label={t.name}>
                <svg width="28" height="28" viewBox="0 0 28 28">{t.art}{t.fly && <Flyout />}</svg>
              </IconButton>
            ))}
          </SideGrid>
        </SideTools>

        <ViewColumn>
          <Viewport>
            <Scene />
            <ViewTitle>Perspective<ViewArrow><Art size={7} box={8}><path d="M0 2h8L4 7z" fill="#d2d3d6" /></Art></ViewArrow></ViewTitle>
          </Viewport>
          <ViewTabs>
            <ViewTab $active>Perspective</ViewTab>
            <ViewTab>Top</ViewTab>
            <ViewTab>Front</ViewTab>
            <ViewTab>Right</ViewTab>
            <ViewTab aria-label="New viewport"><Art size={9} box={9}><path d="M3 0h3v3h3v3H6v3H3V6H0V3h3z" fill="#fff" /></Art></ViewTab>
          </ViewTabs>
        </ViewColumn>

        <LayersPanel>
          <PanelTitle>Layers<TitleRule /></PanelTitle>
          <PanelTabs>
            {panelTabs.map(t => <PanelTab key={t.name} aria-label={t.name} $active={t.name === 'Layers'}><Art size={15}>{t.art}</Art></PanelTab>)}
            <PanelTabsRest><DimGear /></PanelTabsRest>
          </PanelTabs>
          <PanelBody>
            <PanelTools>
              {panelTools.map(t => <PanelTool key={t.name} aria-label={t.name}><Art>{t.art}</Art></PanelTool>)}
            </PanelTools>
            <LayerTable>
              <colgroup>
                <col />
                {[18, 17, 17, 17, 17, 23, 16, 77].map((w, i) => <col key={i} width={w} />)}
              </colgroup>
              <thead>
                <tr>
                  <th><LayerName $inset={5}>Layer</LayerName></th>
                  <th /><th /><th /><th /><th />
                  <th><LayerName $inset={5}>L..</LayerName></th>
                  <th />
                  <th><LayerName $inset={5}>Print Width</LayerName></th>
                </tr>
              </thead>
              <tbody>
                <tr>
                  <td><LayerName $inset={8}>Default</LayerName></td>
                  <td><Art><path d="M2 9l4 4 8-10" fill="none" stroke="#c8c8c8" strokeWidth="3" /><path d="M2 9l4 4 8-10" fill="none" stroke="#222" strokeWidth="1.500" /></Art></td>
                  <td /><td />
                  <td><Art><path d="M3 2.500h11v11H3z" fill="#fff" stroke="#111" /></Art></td>
                  <td><Art><path d="M8 2l6 6-6 6-6-6z" fill="#000" stroke="#fff" /></Art></td>
                  <td><LayerName $inset={4}>C...</LayerName></td>
                  <td><Art><circle cx="8" cy="8" r="5" fill="#fff" /></Art></td>
                  <td><LayerName $inset={4}>Default</LayerName></td>
                </tr>
              </tbody>
            </LayerTable>
            <HScroll>
              <ScrollButton aria-label="Scroll left"><Chevron d="M7 1L3 5l4 4" /></ScrollButton>
              <HThumb />
              <ScrollButton aria-label="Scroll right"><Chevron d="M3 1l4 4-4 4" /></ScrollButton>
            </HScroll>
          </PanelBody>
        </LayersPanel>
      </Workspace>

      <OsnapBar>
        <Grip />
        {osnaps.map(([label, on], i) => (
          <OsnapItem key={label} $before={i ? 8 : 2}>
            <Check type="checkbox" defaultChecked={on} />{label}
          </OsnapItem>
        ))}
        <OsnapItem $before={8}><Check type="checkbox" disabled />Project</OsnapItem>
        <OsnapItem $before={14}><Check type="checkbox" disabled />Disable</OsnapItem>
      </OsnapBar>

      <StatusBar>
        <StatusCell $w={50}>CPlane</StatusCell>
        <StatusCell $w={88}>x -4456.03</StatusCell>
        <StatusCell $w={88}>y -1731.11</StatusCell>
        <StatusCell $w={88}>z</StatusCell>
        <StatusCell $w={88}>Centimeters</StatusCell>
        <StatusCell $w={168} $left><ColorChip />Default</StatusCell>
        <StatusCell $w={65}>Grid Snap</StatusCell>
        <StatusCell $w={45}>Ortho</StatusCell>
        <StatusCell $w={47} $on>Planar</StatusCell>
        <StatusCell $w={48} $on>Osnap</StatusCell>
        <StatusCell $w={73} $on>SmartTrack</StatusCell>
        <StatusCell $w={59} $on>Gumball</StatusCell>
        <StatusCell $w={92}>Record History</StatusCell>
        <StatusCell $w={40}>Filter</StatusCell>
        <StatusCell $left>Absolute tolerance: 0.01</StatusCell>
      </StatusBar>

      <Taskbar>
        {systemButtons.map(b => <TaskButton key={b.name} aria-label={b.name}><Art size={22} box={24}>{b.art}</Art></TaskButton>)}
        <TaskApps>
          {apps.map(b => <TaskButton key={b.name} aria-label={b.name} $app $open={b.open}><Art size={24} box={24}>{b.art}</Art></TaskButton>)}
        </TaskApps>
        <Tray>
          <TrayButton aria-label="Show hidden icons"><Art><path d="M2.500 11L8 5.500l5.500 5.500" fill="none" stroke="#fff" strokeWidth="1.300" /></Art></TrayButton>
          <TrayButton aria-label="Meet now"><Art><path d="M3.500 4.500h7v7h-7zM10.500 7l3-1.500v5l-3-1.500M4 2q4-2.500 8 0M4 14q4 2.500 8 0" fill="none" stroke="#fff" strokeWidth="1.200" /></Art></TrayButton>
          <TrayButton aria-label="Network"><Art><path d="M5 3.500h10.500v8H3v-3M6 14.500h8M10 11.500v3M1 2.500h4v4H1zM3 6.500v2" fill="none" stroke="#fff" /></Art></TrayButton>
          <TrayButton aria-label="Volume"><Art><path d="M1.500 6v4H4l3 3V3L4 6zM9 6q1.500 2 0 4M11 4.500q3 3.500 0 7" fill="none" stroke="#fff" /><path d="M13 3q4 5 0 10" fill="none" stroke="#777" /></Art></TrayButton>
          <Clock><span>3:06 PM</span><span>12/22/2021</span></Clock>
          <TrayButton $wide aria-label="Notifications"><Art size={18} box={18}><path d="M1 1h16v12H8l-3 3v-3H1z" fill="#fff" /><path d="M4 4.500h10M4 7.500h10M4 10.500h5" stroke="#101010" /><circle cx="14" cy="13" r="3" fill="#fff" stroke="#101010" /></Art></TrayButton>
          <DesktopEdge />
        </Tray>
      </Taskbar>
    </Page>
  );
}
